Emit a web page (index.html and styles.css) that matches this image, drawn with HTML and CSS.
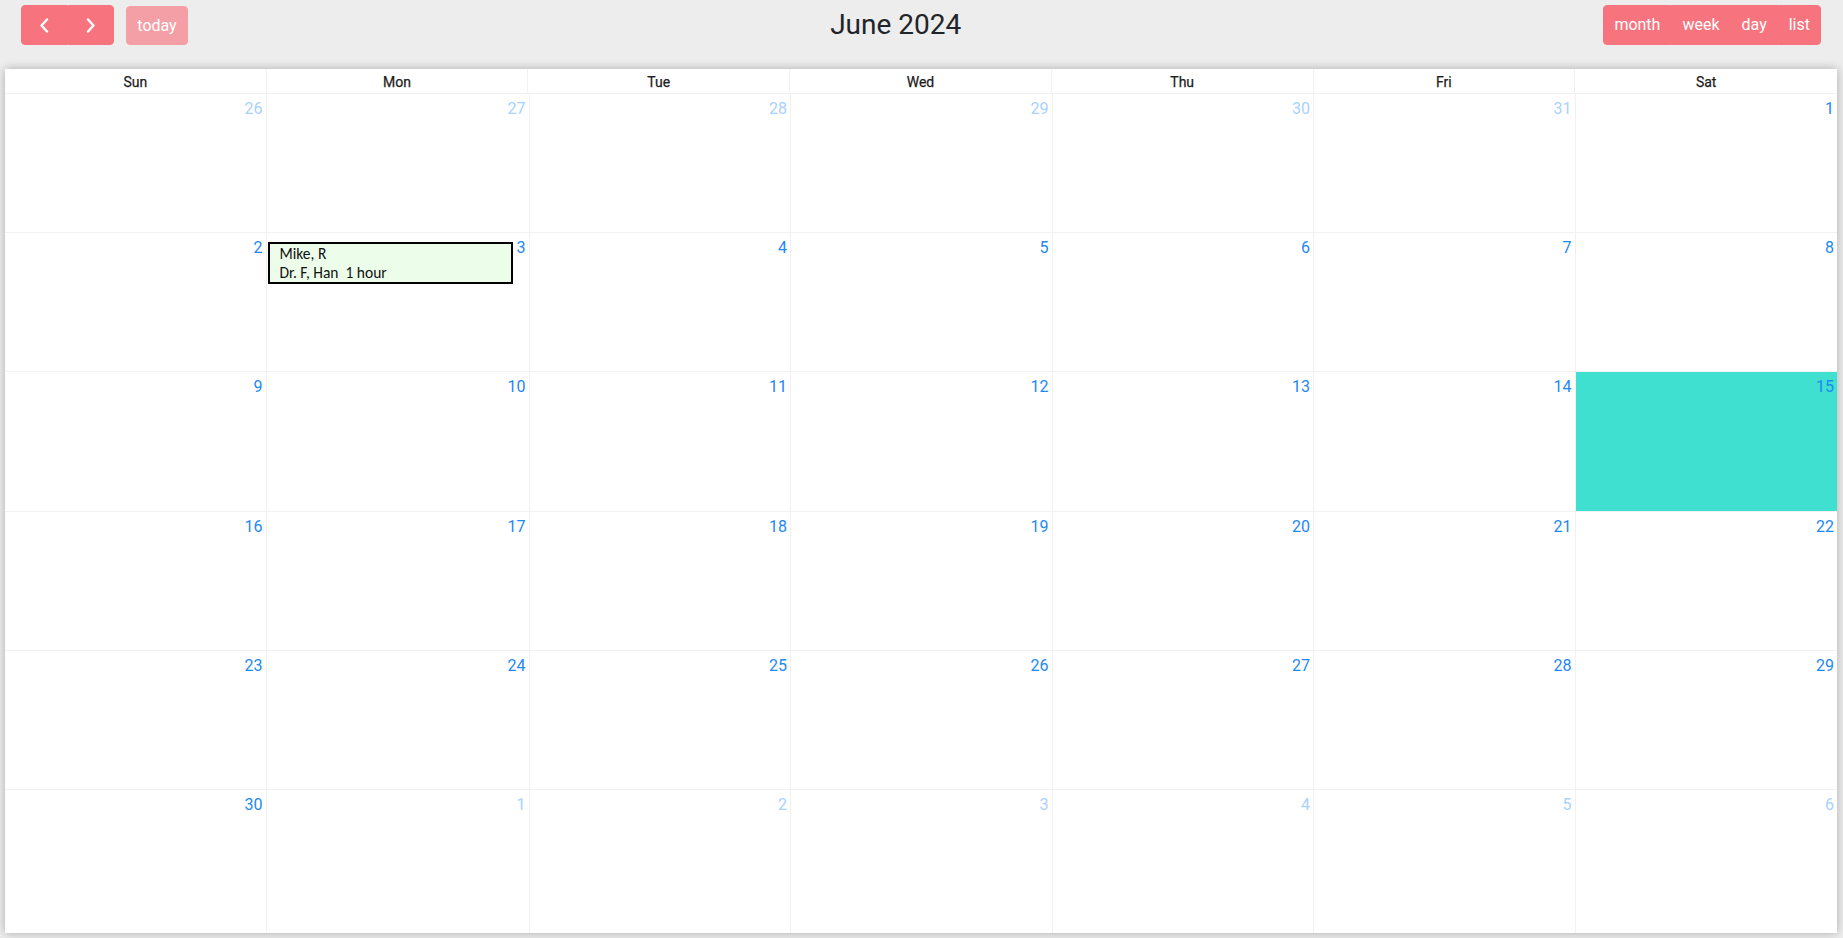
FILE: index.html
```html
<!DOCTYPE html>
<html lang="en">
<head>
<meta charset="utf-8">
<title>June 2024</title>
<link rel="stylesheet" href="styles.css">
</head>
<body>
<div class="page">
  <div class="toolbar">
    <div class="chunk">
      <div class="btn-group">
        <button class="btn btn-icon" aria-label="prev">
          <svg width="10" height="15" viewBox="0 0 10 15"><polyline points="8,1.5 2.5,7.5 8,13.5" fill="none" stroke="#fff" stroke-width="2.4" stroke-linecap="round" stroke-linejoin="round"/></svg>
        </button>
        <button class="btn btn-icon" aria-label="next">
          <svg width="10" height="15" viewBox="0 0 10 15"><polyline points="2,1.5 7.5,7.5 2,13.5" fill="none" stroke="#fff" stroke-width="2.4" stroke-linecap="round" stroke-linejoin="round"/></svg>
        </button>
      </div>
      <button class="btn btn-disabled">today</button>
    </div>
    <h2 class="title">June 2024</h2>
    <div class="chunk">
      <div class="btn-group">
        <button class="btn">month</button>
        <button class="btn">week</button>
        <button class="btn">day</button>
        <button class="btn">list</button>
      </div>
    </div>
  </div>

  <div class="calendar">
    <div class="head">
      <div class="hcell">Sun</div>
      <div class="hcell">Mon</div>
      <div class="hcell">Tue</div>
      <div class="hcell">Wed</div>
      <div class="hcell">Thu</div>
      <div class="hcell">Fri</div>
      <div class="hcell">Sat</div>
    </div>
    <div class="body">
      <div class="day other"><span class="num">26</span></div>
      <div class="day other"><span class="num">27</span></div>
      <div class="day other"><span class="num">28</span></div>
      <div class="day other"><span class="num">29</span></div>
      <div class="day other"><span class="num">30</span></div>
      <div class="day other"><span class="num">31</span></div>
      <div class="day"><span class="num">1</span></div>

      <div class="day"><span class="num">2</span></div>
      <div class="day">
        <div class="event">
          <div class="event-line">Mike, R</div>
          <div class="event-line">Dr. F, Han  1 hour</div>
        </div>
        <span class="num">3</span>
      </div>
      <div class="day"><span class="num">4</span></div>
      <div class="day"><span class="num">5</span></div>
      <div class="day"><span class="num">6</span></div>
      <div class="day"><span class="num">7</span></div>
      <div class="day"><span class="num">8</span></div>

      <div class="day"><span class="num">9</span></div>
      <div class="day"><span class="num">10</span></div>
      <div class="day"><span class="num">11</span></div>
      <div class="day"><span class="num">12</span></div>
      <div class="day"><span class="num">13</span></div>
      <div class="day"><span class="num">14</span></div>
      <div class="day today"><span class="num">15</span></div>

      <div class="day"><span class="num">16</span></div>
      <div class="day"><span class="num">17</span></div>
      <div class="day"><span class="num">18</span></div>
      <div class="day"><span class="num">19</span></div>
      <div class="day"><span class="num">20</span></div>
      <div class="day"><span class="num">21</span></div>
      <div class="day"><span class="num">22</span></div>

      <div class="day"><span class="num">23</span></div>
      <div class="day"><span class="num">24</span></div>
      <div class="day"><span class="num">25</span></div>
      <div class="day"><span class="num">26</span></div>
      <div class="day"><span class="num">27</span></div>
      <div class="day"><span class="num">28</span></div>
      <div class="day"><span class="num">29</span></div>

      <div class="day"><span class="num">30</span></div>
      <div class="day other"><span class="num">1</span></div>
      <div class="day other"><span class="num">2</span></div>
      <div class="day other"><span class="num">3</span></div>
      <div class="day other"><span class="num">4</span></div>
      <div class="day other"><span class="num">5</span></div>
      <div class="day other"><span class="num">6</span></div>
    </div>
  </div>
</div>
</body>
</html>
```

FILE: styles.css
```css
* { box-sizing: border-box; }

html, body {
  margin: 0;
  height: 100%;
  overflow: hidden;
}

body {
  background: #ededed;
  font-family: Roboto, "Liberation Sans", Arial, sans-serif;
  font-size: 16px;
  color: #212529;
}

.page {
  padding: 5px 6px 0 5px;
}

.toolbar {
  display: flex;
  justify-content: space-between;
  align-items: center;
  margin: 0 16px 24px 16px;
  height: 40px;
}

.chunk {
  display: flex;
  align-items: center;
  gap: 12px;
}

.title {
  margin: 0;
  font-size: 28px;
  font-weight: 400;
  line-height: 40px;
  color: #212529;
}

.btn-group {
  display: flex;
}

.btn {
  font-family: Roboto, "Liberation Sans", Arial, sans-serif;
  font-size: 16px;
  line-height: 24px;
  height: 40px;
  padding: 7px 10px;
  color: #fff;
  background: #f7747f;
  border: 1px solid #f7747f;
  border-radius: 4px;
  cursor: pointer;
}

.btn-group .btn {
  border-radius: 0;
}

.btn-group .btn:first-child {
  border-radius: 4px 0 0 4px;
}

.btn-group .btn:last-child {
  border-radius: 0 4px 4px 0;
}

.btn-icon {
  width: 46.5px;
  display: flex;
  align-items: center;
  justify-content: center;
  padding: 0;
}

.btn-disabled {
  width: 62px;
  padding: 7px 0;
  background: #f49fa6;
  border-color: #f49fa6;
  height: 39px;
}

.calendar {
  background: #fff;
  height: 864px;
  box-shadow: 0 0 9px rgba(0, 0, 0, 0.28);
  display: flex;
  flex-direction: column;
}

.head {
  display: grid;
  grid-template-columns: repeat(7, 1fr);
  height: 25px;
  border-bottom: 1px solid #f1f1f1;
}

.hcell {
  text-align: center;
  font-size: 14px;
  font-weight: 400;
  line-height: 21px;
  padding: 3px 0 1px;
  color: #1d1d1d;
  border-right: 1px solid #f1f1f1;
  -webkit-text-stroke: 0.25px #1d1d1d;
}

.hcell:last-child {
  border-right: none;
}

.body {
  flex: 1;
  display: grid;
  grid-template-columns: repeat(7, 1fr);
  grid-template-rows: repeat(5, 139.2px) 1fr;
}

.day {
  display: flex;
  justify-content: flex-end;
  align-items: flex-start;
  border-right: 1px solid #f1f1f1;
  border-bottom: 1px solid #f1f1f1;
}

.day:nth-child(7n) {
  border-right: none;
}

.day:nth-last-child(-n+7) {
  border-bottom: none;
}

.num {
  padding: 5px 3px 4px 4px;
  font-size: 16px;
  line-height: 19px;
  color: #1e88f5;
}

.other .num {
  color: #a9d1ff;
}

.today {
  background: #40e0d0;
}

.event {
  width: 245px;
  margin: 8.5px auto 0 1px;
  border: 2px solid #000;
  background: #ecfdea;
  padding: 0 0 0 10px;
  font-family: Calibri, Carlito, Lato, "Open Sans", sans-serif;
  font-size: 15.5px;
  line-height: 19px;
  color: #111;
}

.event-line {
  white-space: pre;
}
```
